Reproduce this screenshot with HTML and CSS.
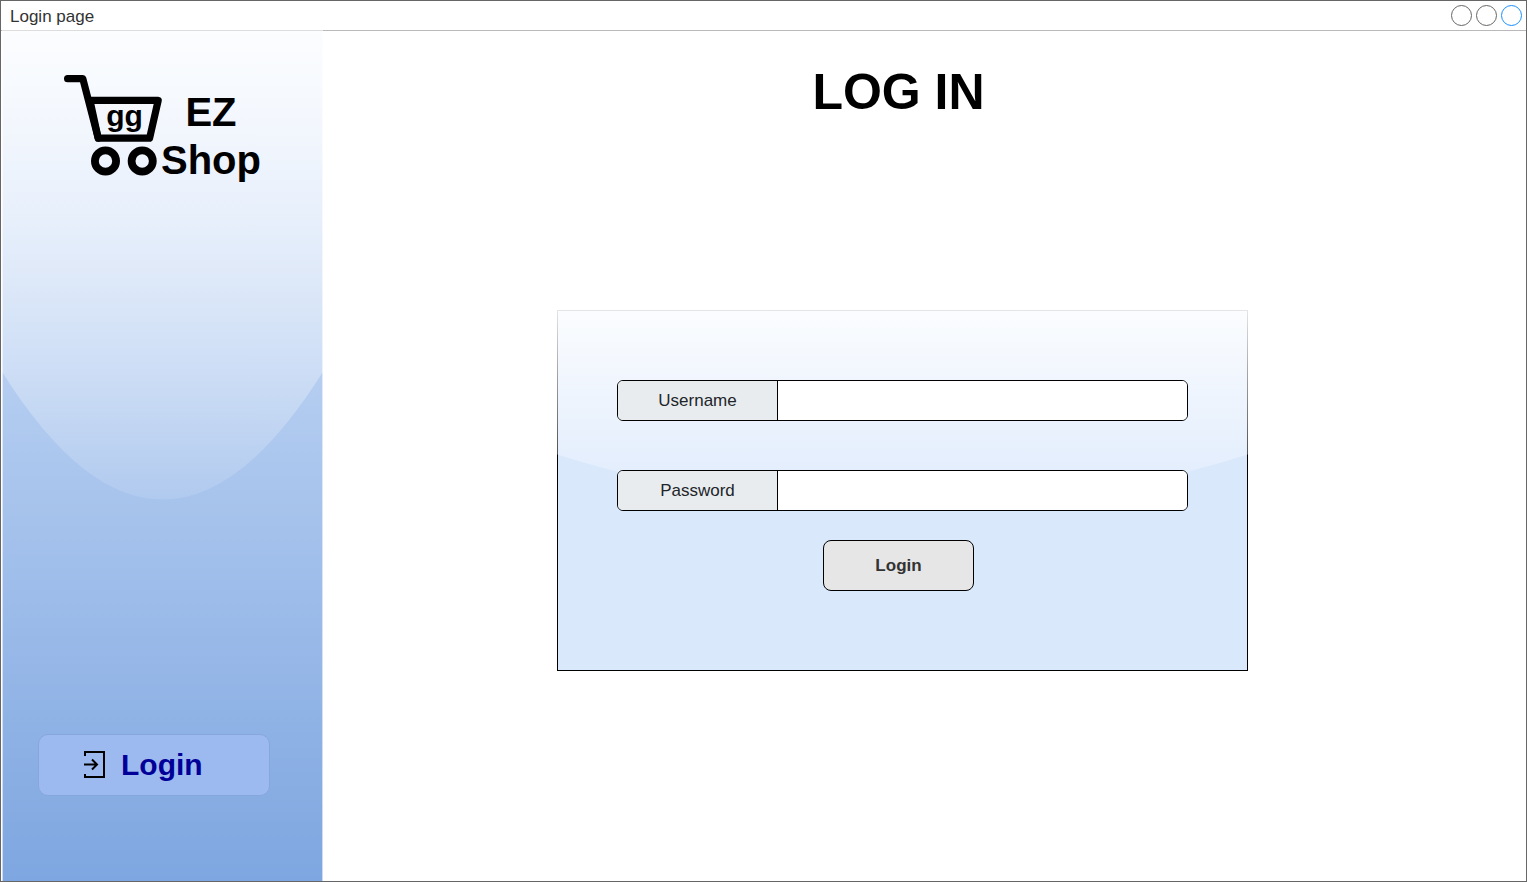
FILE: index.html
```html
<!DOCTYPE html>
<html lang="en">
<head>
<meta charset="utf-8">
<meta name="viewport" content="width=device-width, initial-scale=1">
<title>Login page</title>
<link rel="stylesheet" href="styles.css">
</head>
<body>
<div class="window">
  <header class="titlebar">
    <span class="titlebar-text">Login page</span>
    <div class="window-controls">
      <button class="window-control" type="button" aria-label="Minimize"></button>
      <button class="window-control" type="button" aria-label="Maximize"></button>
      <button class="window-control window-control-close" type="button" aria-label="Close"></button>
    </div>
  </header>
  <div class="content">
    <aside class="sidebar">
      <svg class="glass" viewBox="0 0 100 100" preserveAspectRatio="none" aria-hidden="true">
        <defs>
          <linearGradient id="gloss" x1="0" y1="0" x2="0" y2="1">
            <stop offset="0" stop-color="#fff" stop-opacity="0.9"/>
            <stop offset="1" stop-color="#fff" stop-opacity="0.1"/>
          </linearGradient>
        </defs>
        <path d="M0 0H100V40Q50 70 0 40Z" fill="url(#gloss)"/>
      </svg>
      <div class="brand">
        <svg class="cart" width="97" height="101" viewBox="64 75 97 101" aria-hidden="true">
          <g fill="none" stroke="#000" stroke-width="7.2" stroke-linecap="round" stroke-linejoin="round">
            <path d="M67.6 78.7H82.8L98.2 138.2H149.6L158.2 100.4H90"/>
            <path d="M90 100.4L98.2 138.2"/>
          </g>
          <g fill="none" stroke="#000" stroke-width="7.8">
            <circle cx="105.5" cy="161" r="10.6"/>
            <circle cx="142.2" cy="161" r="10.6"/>
          </g>
          <text class="cart-text" x="124.5" y="126" text-anchor="middle">gg</text>
        </svg>
        <div class="brand-name">EZ<br>Shop</div>
      </div>
      <button class="nav-login" type="button">
        <svg width="22" height="28" viewBox="0 0 22 28" fill="none" stroke="#000" stroke-width="2" aria-hidden="true">
          <path d="M2 5V1H21V26H2V23"/>
          <path d="M1 13.5H13.5M9 8.5L14 13.5L9 18.5"/>
        </svg>
        <span>Login</span>
      </button>
    </aside>
    <main class="main">
      <h1 class="heading">LOG IN</h1>
      <form class="card">
        <svg class="glass" viewBox="0 0 100 100" preserveAspectRatio="none" aria-hidden="true">
          <path d="M0 0H100V40Q50 70 0 40Z" fill="url(#gloss)"/>
        </svg>
        <div class="field">
          <label class="field-label" for="username">Username</label>
          <input class="field-input" id="username" type="text" autocomplete="username">
        </div>
        <div class="field">
          <label class="field-label" for="password">Password</label>
          <input class="field-input" id="password" type="password" autocomplete="current-password">
        </div>
        <div class="actions">
          <button class="submit" type="submit">Login</button>
        </div>
      </form>
    </main>
  </div>
</div>
</body>
</html>
```
FILE: styles.css
```css
* {
  box-sizing: border-box;
}

body {
  margin: 0;
  background: #fff;
  color: #000;
  font-family: "Liberation Sans", Arial, Helvetica, sans-serif;
  font-size: 17px;
}

button,
input {
  font: inherit;
}

.window {
  display: flex;
  flex-direction: column;
  min-height: 100vh;
  margin-right: 1px;
  border: 1px solid #666;
}

.titlebar {
  display: flex;
  align-items: center;
  justify-content: space-between;
  height: 30px;
  padding: 0 4px 0 9px;
  border-bottom: 1px solid #b9b9b9;
  color: #333;
}

.titlebar-text {
  padding-top: 2px;
}

.window-controls {
  display: flex;
  gap: 4px;
}

.window-control {
  width: 21px;
  height: 21px;
  padding: 0;
  border: 1px solid #666;
  border-radius: 50%;
  background: #fff;
}

.window-control-close {
  border-color: #1890ff;
}

.content {
  display: flex;
  flex: 1;
}

.sidebar {
  position: relative;
  display: flex;
  flex-direction: column;
  align-items: flex-start;
  justify-content: space-between;
  width: 321px;
  flex-shrink: 0;
  margin: -1px 0 0 1px;
  padding: 44px 36px 85px;
  border: solid rgba(255, 255, 255, 0.6);
  border-width: 0 1px;
  border-top: 1px solid #ddd;
  background: linear-gradient(#dae8fc, #7ea6e0);
}

/* Glossy highlight, drawn over the panel's border as well */
.glass {
  position: absolute;
  top: -1px;
  left: -1px;
  width: calc(100% + 2px);
  height: calc(100% + 2px);
  pointer-events: none;
}

.sidebar .glass {
  top: 0;
}

.brand,
.nav-login,
.field,
.actions {
  position: relative;
}

.brand {
  display: flex;
  align-items: flex-start;
  margin-left: 25px;
}

.cart {
  overflow: visible;
}

.cart-text {
  font-size: 30px;
  font-weight: bold;
}

.brand-name {
  padding-top: 13px;
  font-size: 40px;
  font-weight: bold;
  line-height: 48px;
  text-align: center;
}

.nav-login {
  display: flex;
  align-items: center;
  gap: 16px;
  width: 232px;
  height: 62px;
  margin-left: -1px;
  padding: 0 44px;
  border: 1px solid #86a7dd;
  border-radius: 10px;
  background: #9dbaf0;
  color: #000099;
  font-size: 30px;
  font-weight: bold;
}

.main {
  display: flex;
  flex: 1;
  flex-direction: column;
  align-items: center;
  padding: 31px 44px 32px 0;
}

.heading {
  margin: 0 8px 188px 0;
  font-size: 50px;
  font-weight: bold;
  line-height: 60px;
}

.card {
  position: relative;
  width: 100%;
  max-width: 691px;
  padding: 69px 59px 79px;
  border: 1px solid #000;
  background: #dae8fc;
}

.field {
  display: flex;
  height: 41px;
  margin-bottom: 49px;
  border: 1px solid #000;
  border-radius: 6px;
  background: #fff;
  overflow: hidden;
}

.field + .field {
  margin-bottom: 29px;
}

.field-label {
  display: flex;
  align-items: center;
  justify-content: center;
  width: 160px;
  border-right: 1px solid #000;
  background: #e9ecef;
  color: #212529;
}

.field-input {
  flex: 1;
  min-width: 0;
  padding: 0 12px;
  border: 0;
  background: #fff;
}

.actions {
  display: flex;
  justify-content: center;
  padding-right: 8px;
}

.submit {
  width: 151px;
  height: 51px;
  border: 1px solid #000;
  border-radius: 8px;
  background: #e6e6e6;
  color: #333;
  font-weight: bold;
}
```
